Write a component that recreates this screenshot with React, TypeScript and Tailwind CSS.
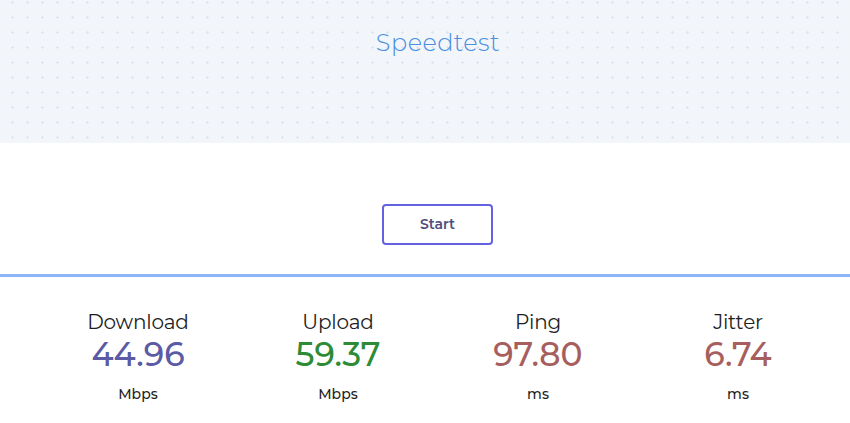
import React from "react"

const stats = [
  { label: "Download", value: "44.96", unit: "Mbps", color: "text-[#5b5aa5]" },
  { label: "Upload", value: "59.37", unit: "Mbps", color: "text-[#2e8b35]" },
  { label: "Ping", value: "97.80", unit: "ms", color: "text-[#a65e5e]" },
  { label: "Jitter", value: "6.74", unit: "ms", color: "text-[#a65e5e]" },
]

export default function App() {
  return (
    <main className="min-h-screen bg-white font-['Montserrat','Inter','Liberation_Sans',sans-serif]">
      {/* Header */}
      <header
        className="h-[143px] bg-[#f2f6fa] flex justify-center pl-[26px] pt-[27px] bg-[radial-gradient(circle,#dfe5ec_1px,transparent_1.2px)] bg-[length:15px_15px] bg-[position:5px_-5px]"
      >
        <h1 className="text-[24px] leading-[32px] font-light text-[#4a90e2] tracking-[0.5px]">Speedtest</h1>
      </header>

      {/* Start */}
      <div className="h-[131px] flex justify-center pl-[25px] pt-[61px]">
        <button className="w-[111px] h-[41px] border-2 border-[#6462e0] rounded-[4px] bg-white text-[14px] font-semibold text-[#4f4d7e]">
          Start
        </button>
      </div>

      <div className="h-[3px] bg-[#8cb4f7]" />

      {/* Results */}
      <section className="w-[800px] ml-[38px] grid grid-cols-4 pt-[33px]">
        {stats.map((s) => (
          <div key={s.label} className="flex flex-col items-center">
            <div className="text-[20px] leading-[25px] tracking-[-0.2px] text-[#1e1e24]">{s.label}</div>
            <div className={`text-[33px] leading-[39px] font-medium ${s.color}`}>{s.value}</div>
            <div className="mt-[11px] text-[14px] leading-[18px] font-medium text-[#1e1e24]">{s.unit}</div>
          </div>
        ))}
      </section>
    </main>
  )
}
